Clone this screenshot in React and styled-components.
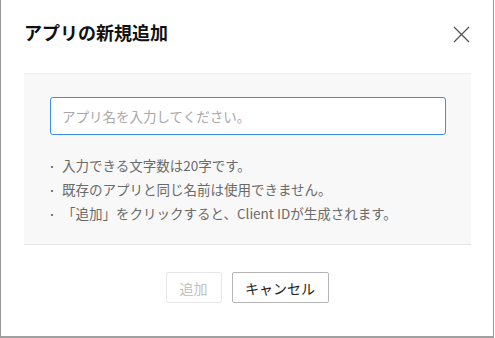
import styled, { createGlobalStyle } from "styled-components";

const GlobalStyle = createGlobalStyle`
  * { box-sizing: border-box; }
  html, body {
    margin: 0;
    padding: 0;
    background: #ffffff;
    font-family: "Noto Sans CJK JP", "Noto Sans", sans-serif;
  }
`;

const Dialog = styled.div`
  width: 494px;
  height: 338px;
  background: #ffffff;
  border-left: 1px solid #9a9a9a;
  border-right: 1px solid #9a9a9a;
  border-bottom: 2px solid #a0a0a0;
  display: flex;
  flex-direction: column;
`;

const Header = styled.div`
  height: 73px;
  display: flex;
  align-items: flex-start;
  justify-content: space-between;
  padding: 22px 23px 0 23px;
`;

const Title = styled.h2`
  margin: 0;
  font-size: 18px;
  line-height: 20px;
  font-weight: 700;
  color: #111;
`;

const CloseButton = styled.button`
  width: 18px;
  height: 18px;
  margin-top: 3px;
  padding: 0;
  border: none;
  background: none;
  cursor: pointer;
  display: flex;
  align-items: center;
  justify-content: center;
`;

const Panel = styled.div`
  margin: 0 22px 0 23px;
  background: #f8f8f8;
  border-top: 1px solid #ececec;
  border-bottom: 1px solid #e6e6e6;
  padding: 23px 25px 19px 26px;
`;

const NameInput = styled.input`
  display: block;
  width: 100%;
  height: 38px;
  border: 1px solid #3a8ee6;
  border-radius: 3px;
  background: #fff;
  padding: 0 11px;
  font-family: inherit;
  font-size: 13.5px;
  color: #222;
  outline: none;
  caret-color: #000;
  &::placeholder {
    color: #a8a8a8;
  }
`;

const Notes = styled.ul`
  list-style: none;
  margin: 18px 0 0;
  padding: 0;
`;

const Note = styled.li`
  font-size: 13.5px;
  line-height: 24px;
  color: #6a6a6a;
  white-space: nowrap;
  &::before {
    content: "";
    display: inline-block;
    width: 2px;
    height: 2px;
    background: #777;
    margin: 0 9px 0 1px;
    vertical-align: middle;
  }
`;

const Footer = styled.div`
  display: flex;
  justify-content: center;
  gap: 10px;
  padding-top: 27px;
`;

const Button = styled.button`
  height: 31px;
  width: ${(p) => p.$width}px;
  border-radius: 2px;
  background: #fff;
  font-family: inherit;
  font-size: 14px;
  padding: 0;
  border: 1px solid ${(p) => (p.disabled ? "#e6e6e6" : "#b5b5b5")};
  color: ${(p) => (p.disabled ? "#c2c2c2" : "#222")};
  cursor: ${(p) => (p.disabled ? "default" : "pointer")};
`;

const notes = [
  "入力できる文字数は20字です。",
  "既存のアプリと同じ名前は使用できません。",
  "「追加」をクリックすると、Client IDが生成されます。",
];

const App = () => {
  return (
    <>
      <GlobalStyle />
      <Dialog>
        <Header>
          <Title>アプリの新規追加</Title>
          <CloseButton aria-label="閉じる">
            <svg width="17" height="17" viewBox="0 0 17 17">
              <path
                d="M1 1 L16 16 M16 1 L1 16"
                stroke="#555"
                strokeWidth="1.3"
                fill="none"
              />
            </svg>
          </CloseButton>
        </Header>
        <Panel>
          <NameInput placeholder="アプリ名を入力してください。" autoFocus />
          <Notes>
            {notes.map((n) => (
              <Note key={n}>{n}</Note>
            ))}
          </Notes>
        </Panel>
        <Footer>
          <Button $width={56} disabled>
            追加
          </Button>
          <Button $width={97}>キャンセル</Button>
        </Footer>
      </Dialog>
    </>
  );
};

export default App;
